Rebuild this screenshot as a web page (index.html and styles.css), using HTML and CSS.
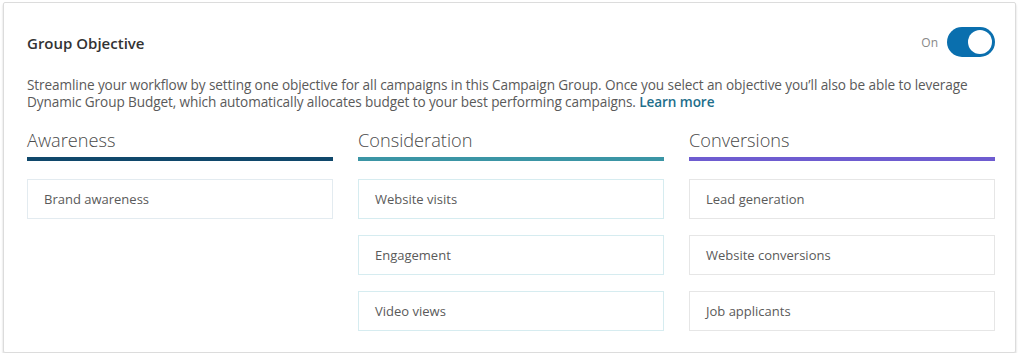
FILE: index.html
```html
<!DOCTYPE html>
<html lang="en">
<head>
  <meta charset="UTF-8" />
  <title>Group Objective</title>
  <link rel="stylesheet" href="styles.css">
</head>
<body>
  <!-- Group Objective card -->
  <section class="card">
    <div class="card-head">
      <h2>Group Objective</h2>
      <div class="toggle-wrap">
        <span class="toggle-label">On</span>
        <span class="toggle"><span class="knob"></span></span>
      </div>
    </div>
    <p class="intro">
      Streamline your workflow by setting one objective for all campaigns in this Campaign Group. Once you select an objective you’ll also be able to leverage<br>
      Dynamic Group Budget, which automatically allocates budget to your best performing campaigns. <a href="#">Learn more</a>
    </p>

    <div class="columns">
      <div class="column awareness">
        <h3>Awareness</h3>
        <ul class="options">
          <li>Brand awareness</li>
        </ul>
      </div>
      <div class="column consideration">
        <h3>Consideration</h3>
        <ul class="options">
          <li>Website visits</li>
          <li>Engagement</li>
          <li>Video views</li>
        </ul>
      </div>
      <div class="column conversions">
        <h3>Conversions</h3>
        <ul class="options">
          <li>Lead generation</li>
          <li>Website conversions</li>
          <li>Job applicants</li>
        </ul>
      </div>
    </div>
  </section>
</body>
</html>
```

FILE: styles.css
```css
:root {
  --text-dark: #333;
  --text-muted: #5a5a5a;
  --toggle-blue: #0a6fae;
  --link-blue: #1f6f8b;
  --awareness: #10486b;
  --consideration: #3b95a5;
  --conversions: #6e5cd0;
}

* {
  margin: 0;
  padding: 0;
  box-sizing: border-box;
}
body {
  font-family: "Open Sans", "Noto Sans", sans-serif;
  background-color: #fff;
  color: var(--text-dark);
  padding: 2px 8px 0 3px;
}
a {
  text-decoration: none;
}

/* Card */
.card {
  border: 1px solid #dcdcdc;
  border-radius: 2px;
  box-shadow: 0 2px 2px rgba(0,0,0,0.22);
  padding: 24px 20px 21px 23px;
  height: 351px;
}
.card-head {
  display: flex;
  align-items: center;
  justify-content: space-between;
}
.card-head h2 {
  font-size: 15px;
  font-weight: 600;
  color: var(--text-dark);
  margin-top: 1px;
}
.toggle-wrap {
  display: flex;
  align-items: center;
  gap: 9px;
}
.toggle-label {
  font-size: 12px;
  color: #888;
}
.toggle {
  width: 48px;
  height: 30px;
  border-radius: 15px;
  background-color: var(--toggle-blue);
  display: flex;
  align-items: center;
  justify-content: flex-end;
  padding-right: 3px;
}
.knob {
  width: 24px;
  height: 24px;
  border-radius: 50%;
  background-color: #fff;
}

.intro {
  margin-top: 19px;
  font-size: 13.6px;
  line-height: 17px;
  color: var(--text-muted);
  letter-spacing: -0.1px;
}
.intro a {
  color: var(--link-blue);
  font-weight: 600;
}

/* Objective columns */
.columns {
  display: grid;
  grid-template-columns: repeat(3, 1fr);
  gap: 25px;
  margin-top: 17px;
}
.column h3 {
  font-size: 18.2px;
  font-weight: 300;
  color: #4a4a4a;
  line-height: 26px;
  padding-bottom: 4px;
  border-bottom: 4px solid var(--awareness);
}
.consideration h3 {
  border-color: var(--consideration);
}
.conversions h3 {
  border-color: var(--conversions);
}
.options {
  list-style: none;
  display: flex;
  flex-direction: column;
  gap: 16px;
  margin-top: 18px;
}
.options li {
  height: 40px;
  display: flex;
  align-items: center;
  padding-left: 16px;
  font-size: 13px;
  color: var(--text-muted);
  border: 1px solid #e3ebf0;
}
.consideration .options li {
  border-color: #d6ecf0;
}
.conversions .options li {
  border-color: #e6e6e6;
}
```
